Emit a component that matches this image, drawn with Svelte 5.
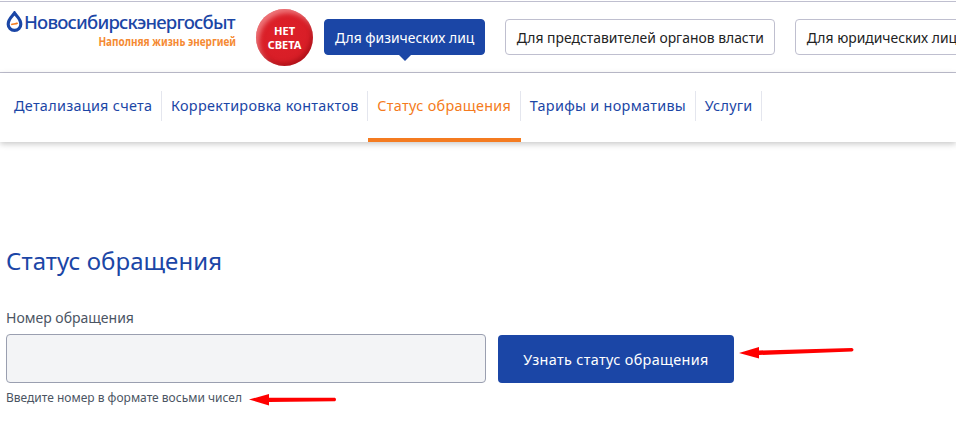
<script>
    const tabs = [
        { title: 'Детализация счета' },
        { title: 'Корректировка контактов' },
        { title: 'Статус обращения', active: true },
        { title: 'Тарифы и нормативы' },
        { title: 'Услуги' }
    ];
</script>

<div class="page">
    <header class="top">
        <div class="logo">
            <div class="logo-name">
                <svg class="drop" width="17" height="21" viewBox="0 0 16 20">
                    <path d="M8 2 C9.500 4.500 14 7.500 14 12.500 A6 6 0 0 1 2 12.500 C2 7.500 6.500 4.500 8 2 Z" fill="none" stroke="#1b46a6" stroke-width="3"/>
                    <path d="M4.800 13 C6.500 12 9 12.800 11 11.500" fill="none" stroke="#f47b20" stroke-width="1.600"/>
                </svg>
                <span>Новосибирскэнергосбыт</span>
            </div>
            <div class="logo-slogan">Наполняя жизнь энергией</div>
        </div>
        <div class="no-power">НЕТ<br />СВЕТА</div>
        <div class="segments">
            <button class="segment active">Для физических лиц</button>
            <button class="segment">Для представителей органов власти</button>
            <button class="segment">Для юридических лиц</button>
        </div>
    </header>

    <nav class="tabs">
        {#each tabs as tab}
            <a href="#top" class="tab" class:active={tab.active}><span>{tab.title}</span></a>
        {/each}
    </nav>

    <main class="content">
        <h1>Статус обращения</h1>
        <label for="num">Номер обращения</label>
        <div class="form-row">
            <div class="field">
                <input id="num" type="text" />
                <p class="hint">Введите номер в формате восьми чисел</p>
            </div>
            <button class="submit">Узнать статус обращения</button>
        </div>
    </main>

    <!-- red arrows drawn over the screenshot -->
    <svg class="arrow arrow-btn" width="120" height="16" viewBox="0 0 120 16">
        <path d="M0 9 L20 3 L20 6.500 L113 4 Q116 5.500 113 7.500 L20 11 L20 14.500 Z" fill="#f00"/>
    </svg>
    <svg class="arrow arrow-hint" width="90" height="14" viewBox="0 0 90 14">
        <path d="M0 6.500 L20 1 L20 4.800 L86 4.800 Q88 6.500 86 8.300 L20 9 L20 12.500 Z" fill="#f00"/>
    </svg>
</div>

<style>
    :global(body) {
        margin: 0;
        background: #fff;
    }

    .page {
        position: relative;
        width: 956px;
        height: 433px;
        overflow: hidden;
        font-family: "Noto Sans", "Open Sans", sans-serif;
    }

    .top {
        display: flex;
        align-items: center;
        box-sizing: border-box;
        height: 72px;
        margin-top: 1px;
        border-top: 1px solid #bfbfcf;
        border-bottom: 1px solid #bfbfcf;
        padding-left: 6px;
    }

    .logo {
        width: 230px;
        flex: none;
        margin-top: -16px;
    }

    .logo-name {
        display: flex;
        align-items: center;
        gap: 1px;
        height: 24px;
        font-size: 18.500px;
        font-weight: 500;
        letter-spacing: -0.800px;
        color: #1b46a6;
        white-space: nowrap;
    }

    .drop {
        flex: none;
    }

    .logo-slogan {
        margin-top: 2px;
        text-align: right;
        font-size: 11.500px;
        line-height: 14px;
        font-weight: 700;
        color: #f58a33;
        white-space: nowrap;
        transform: scaleX(0.87);
        transform-origin: right center;
    }

    .no-power {
        flex: none;
        box-sizing: border-box;
        width: 57px;
        height: 57px;
        margin-left: 20px;
        padding-top: 15px;
        border-radius: 50%;
        background: radial-gradient(circle at 45% 42%, #de2029 0%, #d81e27 60%, #c2161f 100%);
        box-shadow: inset 3px 4px 5px rgba(255, 190, 190, 0.55), inset -2px -3px 4px rgba(120, 0, 10, 0.35);
        color: #fff;
        font-size: 11px;
        font-weight: 700;
        line-height: 14px;
        text-align: center;
    }

    .segments {
        display: flex;
        gap: 20px;
        margin-left: 11px;
        flex: none;
    }

    .segment {
        position: relative;
        box-sizing: border-box;
        height: 36px;
        padding: 0 10.500px;
        border: 1px solid #bfbfcf;
        border-radius: 4px;
        background: #fff;
        color: #222;
        font-family: inherit;
        font-size: 13.900px;
        white-space: nowrap;
    }

    .segment.active {
        padding: 0 10px;
        background: #1b46a6;
        border-color: #1b46a6;
        color: #fff;
    }

    .segment.active::after {
        content: '';
        position: absolute;
        left: 50%;
        bottom: -7px;
        margin-left: -7px;
        border-left: 7px solid transparent;
        border-right: 7px solid transparent;
        border-top: 7px solid #1b46a6;
    }

    .tabs {
        display: flex;
        height: 69px;
        padding-left: 5px;
        box-sizing: border-box;
        box-shadow: 0 2px 6px rgba(0, 0, 0, 0.22);
    }

    .tab {
        display: flex;
        align-items: flex-start;
        box-sizing: border-box;
        padding-top: 18px;
        text-decoration: none;
        color: #1b46a6;
        font-size: 14.400px;
        letter-spacing: 0.300px;
    }

    .tab span {
        display: block;
        height: 30px;
        padding: 5px 8.700px 0 9px;
        box-sizing: border-box;
        border-right: 1px solid #e4e6ee;
        line-height: 20px;
        white-space: nowrap;
    }

    .tab.active {
        color: #f47b20;
        border-bottom: 4px solid #f47b20;
    }

    .content {
        padding: 103px 6px 0;
    }

    h1 {
        margin: 0;
        font-size: 24px;
        font-weight: 400;
        line-height: 32px;
        letter-spacing: 0.060px;
        color: #1b46a6;
    }

    label {
        display: block;
        margin-top: 31px;
        font-size: 14px;
        line-height: 20px;
        color: #4b5563;
    }

    .form-row {
        display: flex;
        gap: 12px;
        margin-top: 6px;
    }

    .field {
        width: 480px;
    }

    input {
        display: block;
        box-sizing: border-box;
        width: 100%;
        height: 49px;
        border: 1px solid #9a9fb0;
        border-radius: 4px;
        background: #f3f4f6;
    }

    .hint {
        margin: 7px 0 0;
        font-size: 12px;
        line-height: 16px;
        color: #4b5563;
    }

    .submit {
        box-sizing: border-box;
        width: 236px;
        height: 48px;
        margin-top: 1px;
        border: none;
        border-radius: 4px;
        background: #1b46a6;
        color: #fff;
        font-family: inherit;
        font-size: 14.400px;
        letter-spacing: 0.350px;
    }

    .arrow {
        position: absolute;
    }

    .arrow-btn {
        left: 739px;
        top: 344px;
    }

    .arrow-hint {
        left: 249px;
        top: 393px;
    }
</style>
